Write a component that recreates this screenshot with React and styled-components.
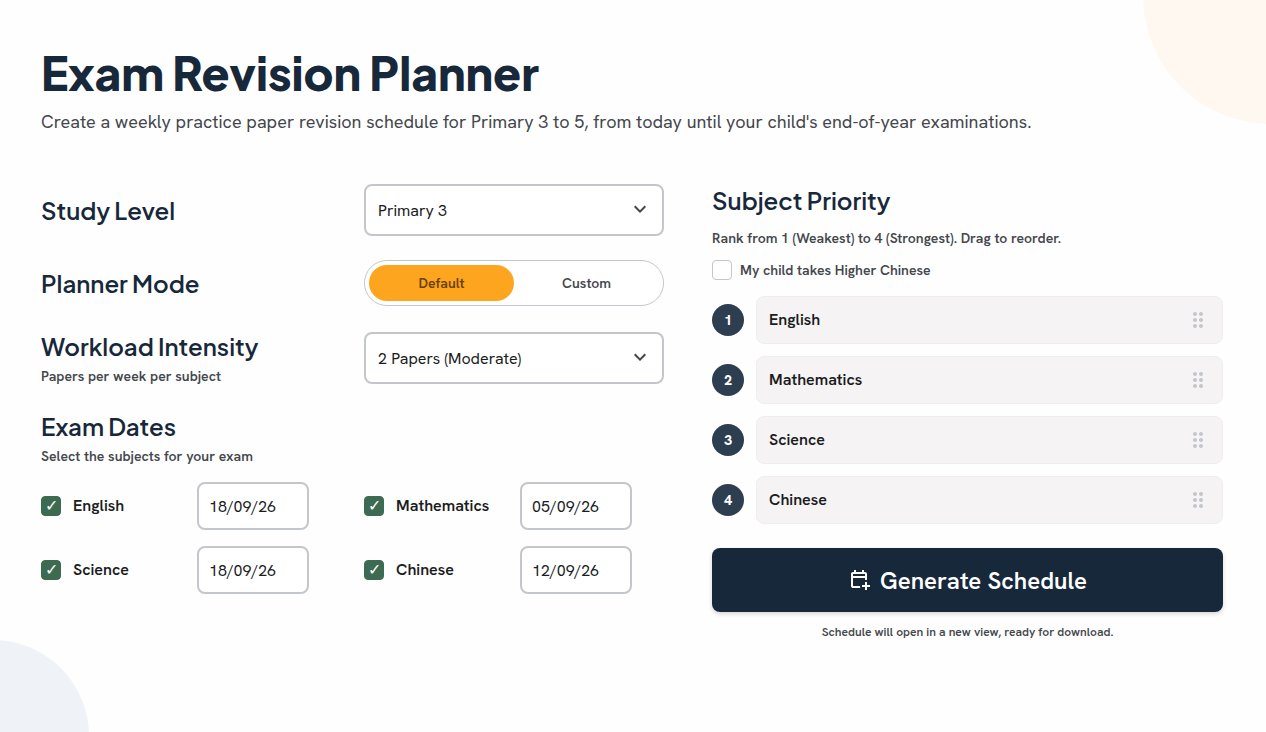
import React, { useState } from 'react';
import styled, { createGlobalStyle, css } from 'styled-components';
import { MdDragIndicator, MdExpandMore } from 'react-icons/md';

const GlobalStyle = createGlobalStyle`
  * {
    box-sizing: border-box;
  }

  body {
    margin: 0;
    background: #fefefe;
    color: #1b1c1d;
    font-family: 'Hanken Grotesk', 'HK Grotesk', Roboto, sans-serif;
    font-size: 16px;
    line-height: 24px;
  }

  button, input, select {
    font-family: inherit;
    color: inherit;
  }
`

const Page = styled.div`
  position: relative;
  min-height: 100vh;
  overflow: hidden;
  padding: 48px 43px 48px 41px;
`

const Blob = styled.div`
  position: absolute;
  border-radius: 50%;
`

const TopBlob = styled(Blob)`
  top: -132px;
  right: -133px;
  width: 256px;
  height: 256px;
  background: #fff8f1;
`

const BottomBlob = styled(Blob)`
  bottom: -100px;
  left: -103px;
  width: 192px;
  height: 192px;
  background: #eff3f8;
`

const Header = styled.header`
  position: relative;
  margin-bottom: 48px;
`

const Title = styled.h1`
  margin: 0 0 12px;
  color: #17283b;
  font-family: 'Plus Jakarta Sans', Inter, sans-serif;
  font-size: 46px;
  font-weight: 800;
  line-height: 48px;
`

const Intro = styled.p`
  margin: 0;
  color: #44474c;
  font-size: 18px;
  line-height: 28px;
`

const Columns = styled.main`
  position: relative;
  display: grid;
  grid-template-columns: 100fr 82fr;
  align-items: start;
  gap: 48px;
`

const Settings = styled.div`
  display: grid;
  gap: 24px;
`

const Setting = styled.div`
  display: grid;
  grid-template-columns: 1fr 300px;
  align-items: center;
  gap: 24px;
`

const Heading = styled.h2`
  display: block;
  margin: 0;
  color: #17283b;
  font-family: 'Plus Jakarta Sans', Inter, sans-serif;
  font-size: 24px;
  font-weight: 600;
  line-height: 32px;
`

const Hint = styled.p`
  margin: 4px 0 0;
  color: #44474c;
  font-size: 14px;
  font-weight: 600;
  line-height: 20px;
`

const SelectBox = styled.div`
  position: relative;
  color: #44474c;

  svg {
    position: absolute;
    top: 13px;
    right: 12px;
    pointer-events: none;
  }
`

const field = css`
  width: 100%;
  border: 2px solid #c4c6cd;
  border-radius: 8px;
  background: #fff;
  color: #1b1c1d;
  font-size: 16px;
`

const Select = styled.select`
  ${field}
  display: block;
  height: 52px;
  padding: 0 40px 0 12px;
  appearance: none;
`

const Toggle = styled.div`
  display: flex;
  height: 46px;
  padding: 4px;
  border: 1px solid #c4c6cd;
  border-radius: 23px;
  background: #fff;
`

const ToggleButton = styled.button`
  flex: 1;
  border: 0;
  border-radius: 18px;
  background: ${props => props.$active ? '#fea520' : 'transparent'};
  color: ${props => props.$active ? '#694000' : '#44474c'};
  font-size: 14px;
  font-weight: 600;
`

const Dates = styled.div`
  display: grid;
  grid-template-columns: 1fr 300px;
  gap: 16px 24px;
  margin-top: 16px;
`

const DateRow = styled.div`
  display: grid;
  grid-template-columns: 144px 112px;
  align-items: center;
  gap: 12px;
`

const DateLabel = styled.label`
  display: flex;
  align-items: center;
  gap: 12px;
  font-weight: 600;
`

const Checkbox = styled.input.attrs({ type: 'checkbox' })`
  display: grid;
  place-items: center;
  flex: none;
  width: 20px;
  height: 20px;
  margin: 0;
  border: 1px solid #c4c6cd;
  border-radius: 4px;
  background: #fff;
  appearance: none;

  &:checked {
    border-color: #3c6b52;
    background: #3c6b52;
  }

  &:checked::after {
    content: '✓';
    color: #fff;
    font-size: 16px;
    font-weight: 400;
    line-height: 18px;
  }
`

const DateInput = styled.input.attrs({ type: 'text' })`
  ${field}
  height: 48px;
  padding: 0 10px;
`

const HigherChinese = styled.label`
  display: flex;
  align-items: center;
  gap: 8px;
  margin: 12px 0 16px;
  color: #44474c;
  font-size: 14px;
  font-weight: 600;
  line-height: 20px;
`

const PriorityHint = styled(Hint)`
  margin-top: 12px;
`

const PriorityList = styled.ol`
  display: grid;
  gap: 12px;
  margin: 0 0 24px;
  padding: 0;
  list-style: none;
`

const PriorityItem = styled.li`
  display: flex;
  align-items: center;
  gap: 12px;
`

const Rank = styled.span`
  display: grid;
  place-items: center;
  flex: none;
  width: 32px;
  height: 32px;
  border-radius: 50%;
  background: #2e3e51;
  color: #fff;
  font-size: 14px;
  font-weight: 800;
`

const SubjectBar = styled.div`
  display: flex;
  flex: 1;
  align-items: center;
  justify-content: space-between;
  height: 48px;
  padding: 0 12px;
  border: 1px solid #efedee;
  border-radius: 8px;
  background: #f5f3f4;
  font-weight: 600;
  cursor: grab;

  svg {
    color: #c4c6cd;
  }
`

const GenerateButton = styled.button`
  display: flex;
  align-items: center;
  justify-content: center;
  gap: 8px;
  width: 100%;
  height: 64px;
  border: 0;
  border-radius: 8px;
  background: #17283b;
  box-shadow: 0 2px 4px rgba(0, 0, 0, 0.16);
  color: #fff;
  font-size: 24px;
  font-weight: 600;
`

const Note = styled.p`
  margin: 12px 0 0;
  color: #44474c;
  font-size: 12px;
  font-weight: 600;
  line-height: 16px;
  text-align: center;
`

const EXAMS = [
  { subject: 'English', date: '18/09/26' },
  { subject: 'Mathematics', date: '05/09/26' },
  { subject: 'Science', date: '18/09/26' },
  { subject: 'Chinese', date: '12/09/26' },
];

function CalendarAddIcon() {
  return (
    <svg width="24" height="24" viewBox="0 0 24 24" fill="currentColor" aria-hidden="true">
      <path d="M17 22v-3h-3v-2h3v-3h2v3h3v2h-3v3h-2Zm-12-2q-.825 0-1.412-.587Q3 18.825 3 18V6q0-.825.588-1.412Q4.175 4 5 4h1V2h2v2h6V2h2v2h1q.825 0 1.413.588Q19 5.175 19 6v6.1q-.5-.075-1-.075t-1 .075V10H5v8h7q0 .5.075 1t.275 1H5ZM5 8h12V6H5v2Z" />
    </svg>
  )
}

export default function App() {
  const [mode, setMode] = useState('Default');

  return (
    <Page>
      <GlobalStyle />
      <TopBlob />
      <BottomBlob />
      <Header>
        <Title>Exam Revision Planner</Title>
        <Intro>Create a weekly practice paper revision schedule for Primary 3 to 5, from today until your child's end-of-year examinations.</Intro>
      </Header>
      <Columns>
        <Settings>
          <Setting>
            <Heading as="label" htmlFor="level">Study Level</Heading>
            <SelectBox>
              <Select id="level">
                <option>Primary 3</option>
                <option>Primary 4</option>
                <option>Primary 5</option>
              </Select>
              <MdExpandMore size={24} />
            </SelectBox>
          </Setting>
          <Setting>
            <Heading id="mode">Planner Mode</Heading>
            <Toggle role="group" aria-labelledby="mode">
              {['Default', 'Custom'].map(name => (
                <ToggleButton key={name} type="button" $active={mode === name} aria-pressed={mode === name} onClick={() => setMode(name)}>{name}</ToggleButton>
              ))}
            </Toggle>
          </Setting>
          <Setting>
            <div>
              <Heading as="label" htmlFor="workload">Workload Intensity</Heading>
              <Hint>Papers per week per subject</Hint>
            </div>
            <SelectBox>
              <Select id="workload">
                <option>2 Papers (Moderate)</option>
              </Select>
              <MdExpandMore size={24} />
            </SelectBox>
          </Setting>
          <section>
            <Heading>Exam Dates</Heading>
            <Hint>Select the subjects for your exam</Hint>
            <Dates>
              {EXAMS.map(exam => (
                <DateRow key={exam.subject}>
                  <DateLabel>
                    <Checkbox defaultChecked />
                    {exam.subject}
                  </DateLabel>
                  <DateInput defaultValue={exam.date} aria-label={`${exam.subject} exam date`} />
                </DateRow>
              ))}
            </Dates>
          </section>
        </Settings>
        <section>
          <Heading>Subject Priority</Heading>
          <PriorityHint>Rank from 1 (Weakest) to 4 (Strongest). Drag to reorder.</PriorityHint>
          <HigherChinese>
            <Checkbox />
            My child takes Higher Chinese
          </HigherChinese>
          <PriorityList>
            {EXAMS.map((exam, index) => (
              <PriorityItem key={exam.subject}>
                <Rank>{index + 1}</Rank>
                <SubjectBar draggable>
                  {exam.subject}
                  <MdDragIndicator size={24} />
                </SubjectBar>
              </PriorityItem>
            ))}
          </PriorityList>
          <GenerateButton type="button">
            <CalendarAddIcon />
            Generate Schedule
          </GenerateButton>
          <Note>Schedule will open in a new view, ready for download.</Note>
        </section>
      </Columns>
    </Page>
  )
}
